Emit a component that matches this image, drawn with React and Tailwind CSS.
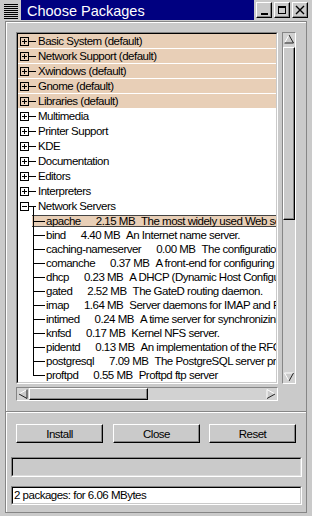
import React from "react";

const groups = [
  { name: "Basic System (default)", sel: true },
  { name: "Network Support (default)", sel: true },
  { name: "Xwindows (default)", sel: true },
  { name: "Gnome (default)", sel: true },
  { name: "Libraries (default)", sel: true },
  { name: "Multimedia" },
  { name: "Printer Support" },
  { name: "KDE" },
  { name: "Documentation" },
  { name: "Editors" },
  { name: "Interpreters" },
];

const servers = [
  ["apache", "2.15 MB", "The most widely used Web server."],
  ["bind", "4.40 MB", "An Internet name server."],
  ["caching-nameserver", "0.00 MB", "The configuration files for a caching nameserver."],
  ["comanche", "0.37 MB", "A front-end for configuring Apache."],
  ["dhcp", "0.23 MB", "A DHCP (Dynamic Host Configuration Protocol) server."],
  ["gated", "2.52 MB", "The GateD routing daemon."],
  ["imap", "1.64 MB", "Server daemons for IMAP and POP network mail protocols."],
  ["intimed", "0.24 MB", "A time server for synchronizing networked machines."],
  ["knfsd", "0.17 MB", "Kernel NFS server."],
  ["pidentd", "0.13 MB", "An implementation of the RFC1413 identification server."],
  ["postgresql", "7.09 MB", "The PostgreSQL server programs."],
  ["proftpd", "0.55 MB", "Proftpd ftp server"],
];

const raised =
  "border border-t-white border-l-white border-r-black border-b-black shadow-[inset_-1px_-1px_0_#868686]";
const sunken =
  "border border-t-[#868686] border-l-[#868686] border-r-white border-b-white";

const Expander = ({ open }) => (
  <svg width="20" height="15" className="shrink-0" shapeRendering="crispEdges">
    <rect x="2.5" y="3.5" width="8" height="8" fill="none" stroke="#000" />
    <line x1="4" y1="7.5" x2="9" y2="7.5" stroke="#000" />
    {!open && <line x1="6.5" y1="5" x2="6.5" y2="10" stroke="#000" />}
    <line x1="11" y1="7.5" x2="18" y2="7.5" stroke="#000" />
    {open && <line x1="15.5" y1="7.5" x2="15.5" y2="15" stroke="#000" />}
  </svg>
);

const Branch = ({ last }) => (
  <svg width="14" height="14" className="shrink-0 -my-px" shapeRendering="crispEdges">
    <line x1="1.5" y1="0" x2="1.5" y2={last ? 8 : 14} stroke="#000" />
    <line x1="2" y1="7.5" x2="13" y2="7.5" stroke="#000" />
  </svg>
);

const Arrow = ({ dir }) => {
  const shapes = {
    up: { pts: "6,2 1.5,10 10.5,10", light: [[1.5, 10, 6, 2]], dark: [[6, 2, 10.5, 10], [10.5, 10, 1.5, 10]] },
    down: { pts: "1.5,2 10.5,2 6,10", light: [[1.5, 2, 10.5, 2], [1.5, 2, 6, 10]], dark: [[10.5, 2, 6, 10]] },
    left: { pts: "2,6 10,1.5 10,10.5", light: [[2, 6, 10, 1.5]], dark: [[10, 1.5, 10, 10.5], [10, 10.5, 2, 6]] },
    right: { pts: "10,6 2,1.5 2,10.5", light: [[2, 1.5, 2, 10.5], [2, 1.5, 10, 6]], dark: [[10, 6, 2, 10.5]] },
  }[dir];
  return (
    <svg width="12" height="12" className="shrink-0">
      <polygon points={shapes.pts} fill="#cacaca" />
      {shapes.light.map((l, i) => (
        <line key={"l" + i} x1={l[0]} y1={l[1]} x2={l[2]} y2={l[3]} stroke="#fff" />
      ))}
      {shapes.dark.map((l, i) => (
        <line key={"d" + i} x1={l[0]} y1={l[1]} x2={l[2]} y2={l[3]} stroke="#222" />
      ))}
    </svg>
  );
};

export default function App() {
  return (
    <div className="w-[312px] h-[516px] bg-[#cacaca] overflow-hidden font-['Liberation_Sans',Arial,sans-serif] text-black">
      {/* title bar */}
      <div className="flex h-[20px]">
        <div className="w-[20px] h-[20px] shrink-0">
          <svg width="20" height="20" shapeRendering="crispEdges">
            {[4, 6, 8, 10, 12, 14, 16, 18].map((y) => (
              <line key={y} x1="4" y1={y + 0.5} x2="18" y2={y + 0.5} stroke="#000" />
            ))}
          </svg>
        </div>
        <div className="ml-px w-[233px] h-[20px] bg-[#000080] text-white text-[14.5px] leading-[23px] pl-[6px] whitespace-nowrap">
          Choose Packages
        </div>
        <div className="flex gap-[2px] ml-[2px] pt-[2px]">
          <div className={`w-[16px] h-[16px] ${raised} flex items-end justify-center pb-[2px]`}>
            <div className="w-[7px] h-[2px] bg-black" />
          </div>
          <div className={`w-[16px] h-[16px] ${raised} flex items-center justify-center`}>
            <div className="w-[8px] h-[8px] border border-black border-t-2" />
          </div>
          <div className={`w-[16px] h-[16px] ${raised} flex items-center justify-center`}>
            <svg width="10" height="10">
              <path d="M1 1 L9 9 M9 1 L1 9" stroke="#000" strokeWidth="1.4" />
            </svg>
          </div>
        </div>
      </div>

      {/* dialog body */}
      <div className="ml-[5px] mt-px w-[302px] h-[492px] border border-[#868686] shadow-[inset_1px_1px_0_#fff] flex flex-col">
        <div className="pl-[10px] pt-[10px]">
          <div className="flex">
            <div className="w-[262px] h-[352px] border border-t-[#868686] border-l-[#868686] border-r-white border-b-white">
              <div className="w-full h-full border border-t-black border-l-black border-r-[#cacaca] border-b-[#cacaca] bg-white overflow-hidden whitespace-nowrap text-[11.5px] tracking-[-0.5px]">
                {groups.map((g) => (
                  <div
                    key={g.name}
                    className={`flex h-[15px] leading-[15px] ${g.sel ? "bg-[#e8cfb7] shadow-[inset_0_-1px_0_#fff]" : ""}`}
                  >
                    <Expander />
                    <span>{g.name}</span>
                  </div>
                ))}
                <div className="flex h-[15px] leading-[15px]">
                  <Expander open />
                  <span>Network Servers</span>
                </div>
                {servers.map(([name, size, desc], i) => (
                  <div key={name} className="flex h-[14px] leading-[14px]">
                    <div className="w-[14px] shrink-0" />
                    <div
                      className={`flex flex-1 items-center ${
                        i === 0 ? "h-[12px] my-px bg-[#e8cfb7] border-y border-[#444]" : "h-[14px]"
                      }`}
                    >
                      <Branch last={i === servers.length - 1} />
                      <span>{name}</span>
                      <span className="ml-[15px]">{size}</span>
                      <span className="ml-[6px]">{desc}</span>
                    </div>
                  </div>
                ))}
              </div>
            </div>

            {/* vertical scrollbar */}
            <div className={`ml-[4px] w-[14px] h-[352px] ${sunken} bg-[#d2d2d2] flex flex-col`}>
              <Arrow dir="up" />
              <div className={`mt-[2px] h-[173px] bg-[#cacaca] ${raised}`} />
              <div className="flex-1" />
              <Arrow dir="down" />
            </div>
          </div>

          {/* horizontal scrollbar */}
          <div className={`mt-[3px] w-[262px] h-[14px] ${sunken} bg-[#d2d2d2] flex`}>
            <Arrow dir="left" />
            <div className={`w-[119px] h-full bg-[#cacaca] ${raised}`} />
            <div className="flex-1" />
            <Arrow dir="right" />
          </div>
        </div>

        {/* separator */}
        <div className="mt-[10px] h-[2px] border-t border-[#868686] bg-white" />

        {/* buttons */}
        <div className="mt-[11px] pl-[10px] flex text-[11.5px] tracking-[-0.5px]">
          <button className={`w-[87px] h-[19px] ${raised} bg-[#cacaca] leading-[16px]`}>Install</button>
          <button className={`ml-[10px] w-[87px] h-[19px] ${raised} bg-[#cacaca] leading-[16px]`}>Close</button>
          <button className={`ml-[9px] w-[87px] h-[19px] ${raised} bg-[#cacaca] leading-[16px]`}>Reset</button>
        </div>

        {/* progress */}
        <div className="mt-[14px] ml-[5px] w-[291px] h-[20px] border border-t-[#868686] border-l-[#868686] border-r-white border-b-white">
          <div className="w-full h-full border border-t-black border-l-black border-r-[#dcdcdc] border-b-[#dcdcdc]" />
        </div>

        {/* status */}
        <div className="mt-[9px] ml-[5px] w-[291px] h-[19px] border border-t-[#868686] border-l-[#868686] border-r-white border-b-white">
          <div className="w-full h-full border border-t-black border-l-black border-r-[#cacaca] border-b-[#cacaca] bg-white text-[11.5px] tracking-[-0.5px] leading-[15px] pl-[1px] whitespace-nowrap">
            2 packages: for 6.06 MBytes
          </div>
        </div>
      </div>
    </div>
  );
}
